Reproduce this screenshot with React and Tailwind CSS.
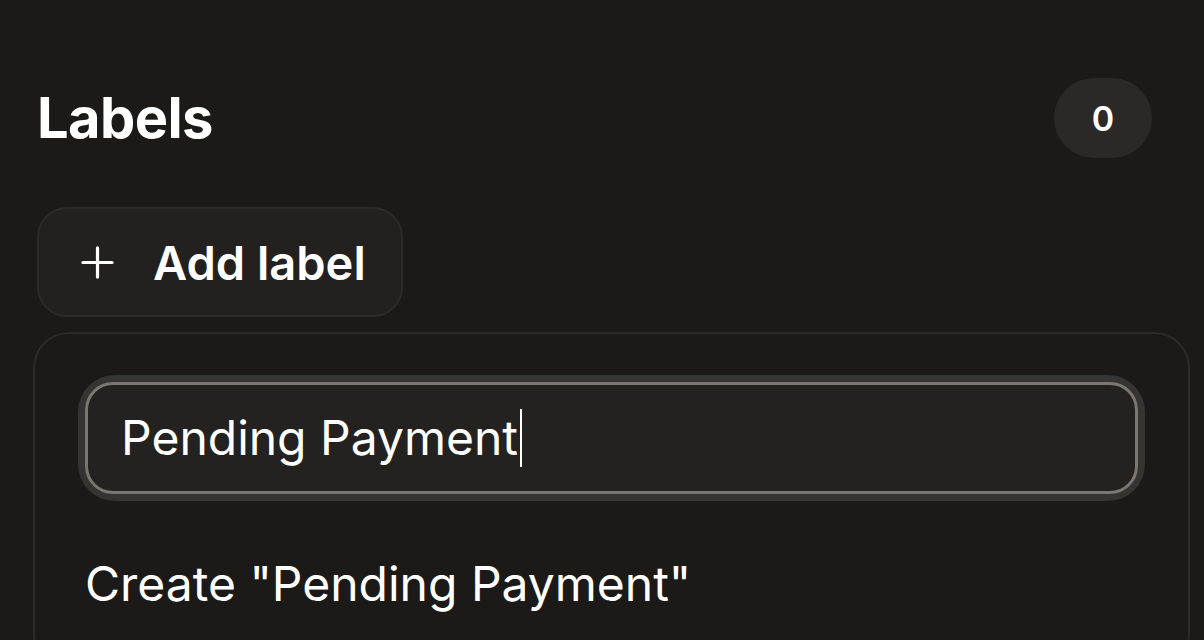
import React from 'react';

const App = () => {
  return (
    <div className="h-screen w-full overflow-hidden bg-[#1b1a19] text-white font-['Inter',sans-serif]">
      {/* Header */}
      <div className="flex items-center justify-between pl-[37px] pr-[52px] pt-[78px]">
        <h2 className="text-[56px] font-bold leading-none tracking-[-0.6px]">Labels</h2>
        <span className="flex h-[80px] w-[98px] items-center justify-center rounded-full bg-[#2a2928] text-[34px] font-semibold">
          0
        </span>
      </div>

      {/* Add label button */}
      <div className="pl-[37px] mt-[49px]">
        <button className="flex h-[110px] w-[366px] items-center gap-[38px] rounded-[30px] border-2 border-[#2c2b2a] bg-[#222120] pl-[41px]">
          <svg width="35" height="35" viewBox="0 0 24 24" fill="none" stroke="currentColor" strokeWidth="2.2" strokeLinecap="round">
            <path d="M12 2v20M2 12h20" />
          </svg>
          <span className="text-[47px] font-semibold leading-none">Add label</span>
        </button>
      </div>

      {/* Popover */}
      <div className="ml-[33px] mt-[15px] w-[1157px] rounded-[36px] border-2 border-[#2c2b2a] bg-[#1b1a19] px-[50px] pt-[48px]">
        <div className="rounded-[30px] ring-[7px] ring-[#363432]">
          <div className="flex h-[112px] items-center rounded-[28px] border-[3px] border-[#7c7670] bg-[#232221] pl-[33px]">
            <span className="text-[48px] leading-none">Pending Payment</span>
            <span className="ml-[2px] h-[58px] w-[2px] bg-white" />
          </div>
        </div>
        <div className="pt-[66px] pb-[60px] text-[48px] leading-none">Create "Pending Payment"</div>
      </div>
    </div>
  );
};

export default App;
